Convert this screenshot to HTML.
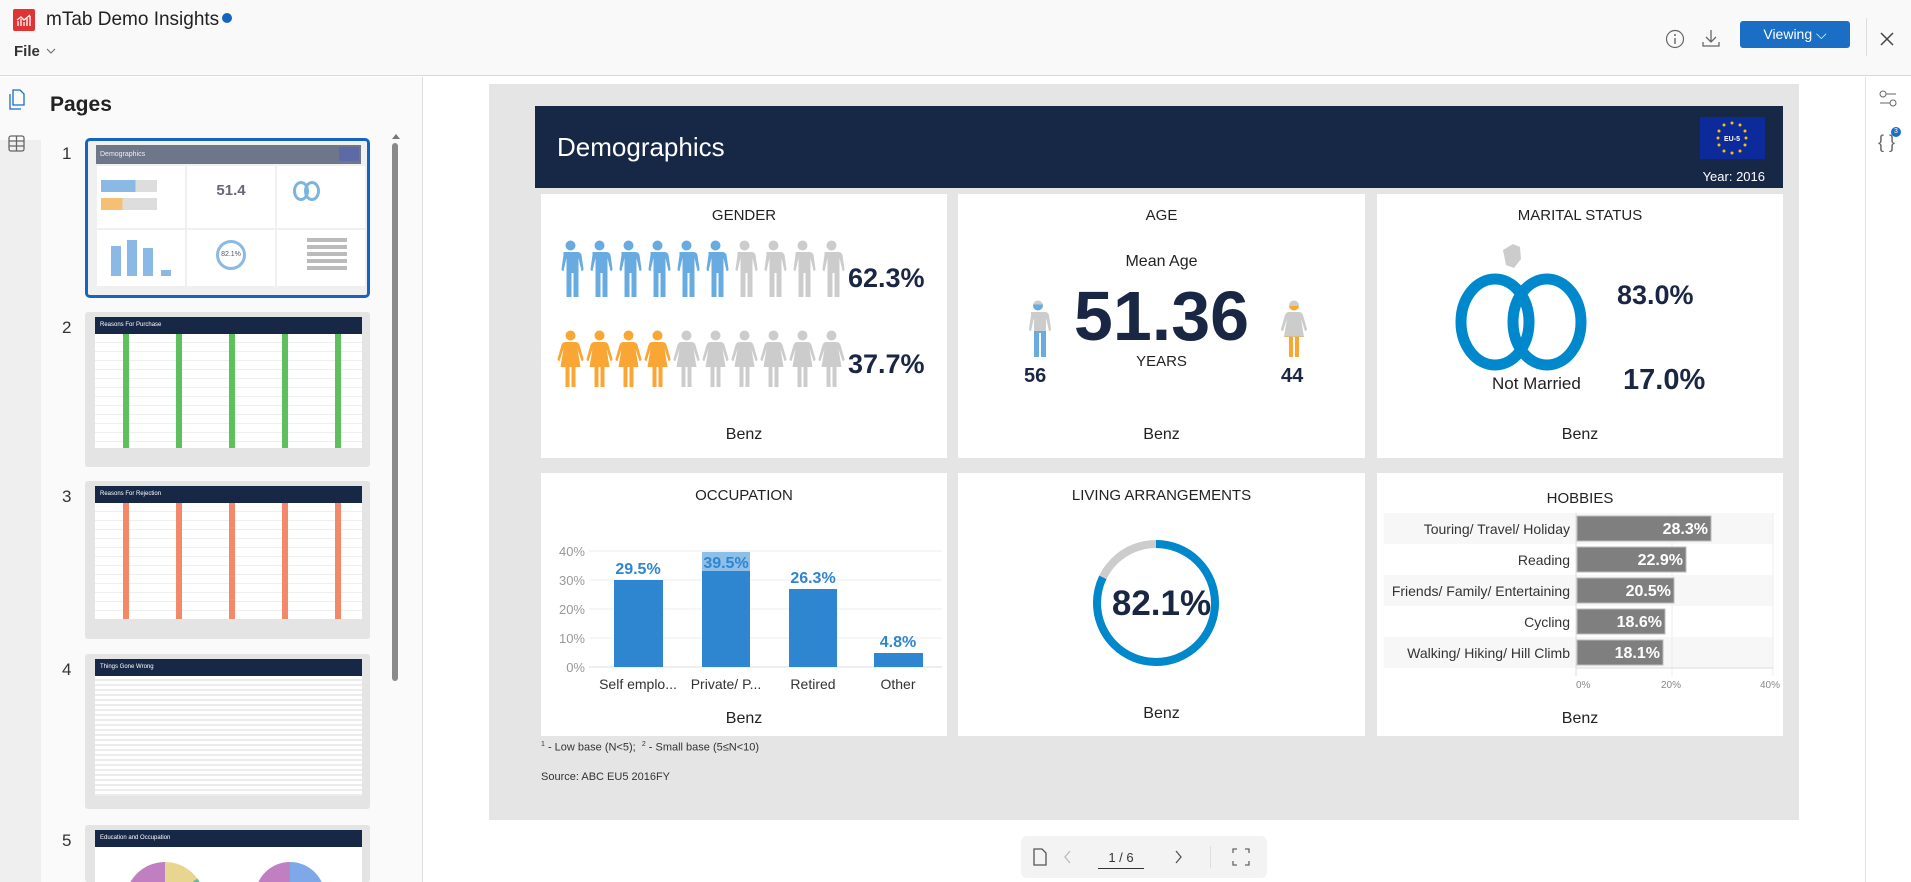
<!DOCTYPE html>
<html><head><meta charset="utf-8">
<style>
*{box-sizing:border-box;margin:0;padding:0}
html,body{width:1911px;height:882px;overflow:hidden}
body{background:#fff;font-family:"Liberation Sans",Arial,sans-serif;color:#222;position:relative}
.abs{position:absolute}
.hdr{left:0;top:0;width:1911px;height:76px;background:#f9f9f9;border-bottom:1px solid #d9d9d9}
.rail{left:0;top:77px;width:41px;height:805px;background:#efefef}
.panel{left:41px;top:77px;width:382px;height:805px;background:#fafafa;border-right:1px solid #ddd}
.rrail{left:1865px;top:77px;width:46px;height:805px;background:#fff;border-left:1px solid #e2e2e2}
.canvas{left:489px;top:84px;width:1310px;height:736px;background:#e5e5e5}
.banner{left:535px;top:106px;width:1248px;height:82px;background:#172847}
.card{background:#fff}
.ct{position:absolute;left:0;width:100%;text-align:center;font-size:15px;color:#222}
.big{font-weight:bold;color:#1a2744}
.thumb{left:85px;width:285px;background:#e4e4e4;border-radius:3px;overflow:hidden}
.tnum{left:62px;font-size:17px;color:#333}
.th{position:absolute;left:10px;right:8px;top:5px;height:17px;background:#172847;color:#fff;font-size:6px;line-height:17px;padding-left:5px}
.tb{position:absolute;left:10px;right:8px;top:22px;background:#fff;overflow:hidden}
.grn{background:repeating-linear-gradient(90deg,transparent 0 28px,#5cc05c 28px 34px,transparent 34px 53px) 0 0/100% 100%,repeating-linear-gradient(#fff 0 8px,#eee 8px 9px)}
</style></head><body>

<div class="abs hdr"></div>
<div class="abs" style="left:13px;top:9px;width:22px;height:22px;background:#e03333;border-radius:2px"></div>
<svg class="abs" style="left:15px;top:11px" width="18" height="18" viewBox="0 0 18 18"><path d="M3 15V10M6 15V8M9 15V11M12 15V7M15 15V5M2 9l4-3 3 3 6-5" stroke="#fff" stroke-width="1.3" fill="none"/></svg>
<div class="abs" style="left:46px;top:9px;font-size:19px;color:#222;white-space:nowrap">mTab Demo Insights<span style="display:inline-block;width:10px;height:10px;border-radius:50%;background:#1565c0;margin-left:3px;vertical-align:2px"></span></div>
<div class="abs" style="left:14px;top:43px;font-size:15px;font-weight:bold;color:#333">File</div>
<svg class="abs" style="left:46px;top:48px" width="10" height="7"><path d="M1 1l4 4 4-4" stroke="#666" fill="none"/></svg>
<svg class="abs" style="left:1665px;top:29px" width="20" height="20"><circle cx="10" cy="10" r="8.5" stroke="#666" fill="none" stroke-width="1.2"/><path d="M10 9v6" stroke="#666" stroke-width="1.4"/><circle cx="10" cy="6" r="1" fill="#666"/></svg>
<svg class="abs" style="left:1700px;top:27px" width="22" height="22"><path d="M11 3v12M6 10l5 5 5-5M3 15v4h16v-4" stroke="#666" fill="none" stroke-width="1.3"/></svg>
<div class="abs" style="left:1740px;top:21px;width:110px;height:27px;background:#1a6fc4;border-radius:3px;color:#fff;font-size:14px;line-height:27px;text-align:center">Viewing ⌵</div>
<div class="abs" style="left:1866px;top:18px;width:1px;height:38px;background:#ddd"></div>
<svg class="abs" style="left:1879px;top:31px" width="16" height="16"><path d="M2 2l12 12M14 2L2 14" stroke="#444" stroke-width="1.5"/></svg>

<div class="abs rail"></div>
<div class="abs" style="left:0;top:77px;width:41px;height:63px;background:#fafafa"></div>
<svg class="abs" style="left:7px;top:88px" width="20" height="22"><path d="M6 2h7l4 4v11H6z" stroke="#1a6fc4" fill="none" stroke-width="1.3"/><path d="M3 6v15h11" stroke="#1a6fc4" fill="none" stroke-width="1.3"/></svg>
<svg class="abs" style="left:7px;top:134px" width="20" height="20"><rect x="2" y="2" width="15" height="15" rx="2" stroke="#666" fill="none" stroke-width="1.3"/><path d="M2 7h15M2 12h15M9.5 2v15" stroke="#666" stroke-width="1.3"/></svg>
<div class="abs panel"></div>
<div class="abs" style="left:50px;top:93px;font-size:21px;font-weight:bold;color:#222">Pages</div>
<div class="abs rrail"></div>
<svg class="abs" style="left:1878px;top:89px" width="20" height="20"><circle cx="5" cy="5" r="3" stroke="#666" fill="none"/><path d="M8 5h10M2 14h10" stroke="#666"/><circle cx="15" cy="14" r="3" stroke="#666" fill="none"/></svg>
<div class="abs" style="left:1878px;top:132px;font-size:18px;color:#666">{ }</div>
<div class="abs" style="left:1891px;top:127px;width:10px;height:10px;border-radius:50%;background:#1a6fc4;color:#fff;font-size:7px;text-align:center;line-height:10px">3</div>

<div class="abs" style="left:392px;top:134px;width:0;height:0;border-left:4px solid transparent;border-right:4px solid transparent;border-bottom:5px solid #777"></div>
<div class="abs" style="left:392px;top:143px;width:6px;height:538px;background:#8a8a8a;border-radius:3px"></div>

<div class="abs tnum" style="top:144px">1</div>
<div class="abs thumb" style="top:138px;height:160px;border:3px solid #1565c0;border-radius:5px;background:#f0f0f0">
 <div style="position:absolute;left:8px;right:6px;top:4px;height:19px;background:#6e7789;color:#eee;font-size:7px;line-height:19px;padding-left:4px">Demographics<span style="position:absolute;right:2px;top:2px;width:20px;height:14px;background:#5e6aa8"></span></div>
 <div style="position:absolute;left:9px;top:25px;width:88px;height:62px;background:#fff"><div style="position:absolute;left:4px;top:14px;width:56px;height:12px;background:linear-gradient(90deg,#8ab9e5 62%,#ddd 62%)"></div><div style="position:absolute;left:4px;top:32px;width:56px;height:12px;background:linear-gradient(90deg,#f5c074 38%,#ddd 38%)"></div></div>
 <div style="position:absolute;left:99px;top:25px;width:88px;height:62px;background:#fff;text-align:center;font-size:15px;font-weight:bold;color:#667;padding-top:16px">51.4</div>
 <div style="position:absolute;left:189px;top:25px;width:88px;height:62px;background:#fff"><div style="position:absolute;left:16px;top:15px;width:16px;height:20px;border:3px solid #7ab5e0;border-radius:50%"></div><div style="position:absolute;left:27px;top:15px;width:16px;height:20px;border:3px solid #7ab5e0;border-radius:50%"></div></div>
 <div style="position:absolute;left:9px;top:89px;width:88px;height:56px;background:#fff"><div style="position:absolute;left:14px;top:16px;width:10px;height:30px;background:#8ab9e5"></div><div style="position:absolute;left:30px;top:10px;width:10px;height:36px;background:#8ab9e5"></div><div style="position:absolute;left:46px;top:18px;width:10px;height:28px;background:#8ab9e5"></div><div style="position:absolute;left:64px;top:40px;width:10px;height:6px;background:#8ab9e5"></div></div>
 <div style="position:absolute;left:99px;top:89px;width:88px;height:56px;background:#fff"><div style="position:absolute;left:29px;top:10px;width:30px;height:30px;border:3px solid #8ab9e5;border-radius:50%;font-size:7px;text-align:center;line-height:24px;color:#556">82.1%</div></div>
 <div style="position:absolute;left:189px;top:89px;width:88px;height:56px;background:#fff"><div style="position:absolute;left:30px;top:8px;width:40px;height:32px;background:repeating-linear-gradient(#bbb 0 4px,#fff 4px 7px)"></div></div>
</div>

<div class="abs tnum" style="top:318px">2</div>
<div class="abs thumb" style="top:312px;height:155px"><div class="th">Reasons For Purchase</div><div class="tb grn" style="height:114px"></div></div>
<div class="abs tnum" style="top:487px">3</div>
<div class="abs thumb" style="top:481px;height:158px"><div class="th">Reasons For Rejection</div><div class="tb" style="height:116px;background:repeating-linear-gradient(90deg,transparent 0 28px,#f4896a 28px 34px,transparent 34px 53px),repeating-linear-gradient(#fff 0 8px,#eee 8px 9px)"></div></div>
<div class="abs tnum" style="top:660px">4</div>
<div class="abs thumb" style="top:654px;height:155px"><div class="th">Things Gone Wrong</div><div class="tb" style="height:120px;background:repeating-linear-gradient(#fff 0 3px,#ececec 3px 5px)"></div></div>
<div class="abs tnum" style="top:831px">5</div>
<div class="abs thumb" style="top:825px;height:57px"><div class="th">Education and Occupation</div><div class="tb" style="height:35px"><div style="position:absolute;left:30px;top:15px;width:80px;height:80px;border-radius:50%;background:conic-gradient(#e8d590 0 15%,#6bb6a0 15% 22%,#c07fc0 22% 100%)"></div><div style="position:absolute;left:160px;top:15px;width:70px;height:70px;border-radius:50%;background:conic-gradient(#7fa8e8 0 30%,#fff 30% 75%,#c07fc0 75% 100%)"></div></div></div>

<div class="abs canvas"></div>
<div class="abs banner"></div>
<div class="abs" style="left:557px;top:132px;font-size:26px;color:#fff">Demographics</div>
<div class="abs" style="left:1700px;top:117px;width:65px;height:42px;background:#0d2a9a"></div>
<svg class="abs" style="left:1700px;top:117px" width="65" height="42"><g fill="#f5c400"><circle cx="32" cy="6" r="1.5"/><circle cx="40" cy="8" r="1.5"/><circle cx="45" cy="14" r="1.5"/><circle cx="46" cy="21" r="1.5"/><circle cx="45" cy="28" r="1.5"/><circle cx="40" cy="34" r="1.5"/><circle cx="32" cy="36" r="1.5"/><circle cx="24" cy="34" r="1.5"/><circle cx="19" cy="28" r="1.5"/><circle cx="18" cy="21" r="1.5"/><circle cx="19" cy="14" r="1.5"/><circle cx="24" cy="8" r="1.5"/></g><text x="32" y="24" fill="#fff" font-size="7" font-weight="bold" text-anchor="middle" font-family="Liberation Sans">EU-5</text></svg>
<div class="abs" style="left:1700px;top:169px;width:65px;text-align:right;font-size:13px;color:#fff;white-space:nowrap">Year: 2016</div>

<svg width="0" height="0" style="position:absolute"><defs>
<symbol id="man" viewBox="0 0 26 60"><circle cx="13" cy="5.5" r="5"/><path d="M6 12h14q3 0 4 3l2 14q0 2-2 2l-3-13v39h-5V33h-2v24H9V18l-3 13q-2 0-2-2l2-14q0-3 0-3z"/></symbol>
<symbol id="woman" viewBox="0 0 26 60"><circle cx="13" cy="5.5" r="5"/><path d="M8 12h10q3 0 4 3l4 14q0 2-2 2l-4-12 3 18h-5v20h-4V37h-2v20H8V37H3l3-18-4 12q-2 0-2-2l4-14q1-3 4-3z"/></symbol>
<linearGradient id="mg" x1="0" y1="0" x2="0" y2="1"><stop offset=".42" stop-color="#cccccc"/><stop offset=".42" stop-color="#68abe0"/></linearGradient>
<linearGradient id="fg" x1="0" y1="0" x2="0" y2="1"><stop offset=".55" stop-color="#cccccc"/><stop offset=".55" stop-color="#faa634"/></linearGradient>
</defs></svg>

<div class="abs card" style="left:541px;top:194px;width:406px;height:264px">
 <div class="ct" style="top:13px">GENDER</div>
 <svg class="abs" style="left:16px;top:46px" width="290" height="62"><g fill="#68abe0"><use href="#man" x="0" width="27" height="60"/><use href="#man" x="29" width="27" height="60"/><use href="#man" x="58" width="27" height="60"/><use href="#man" x="87" width="27" height="60"/><use href="#man" x="116" width="27" height="60"/><use href="#man" x="145" width="27" height="60"/></g><g fill="#cccccc"><use href="#man" x="174" width="27" height="60"/><use href="#man" x="203" width="27" height="60"/><use href="#man" x="232" width="27" height="60"/><use href="#man" x="261" width="27" height="60"/></g></svg>
 <svg class="abs" style="left:16px;top:136px" width="290" height="62"><g fill="#faa634"><use href="#woman" x="0" width="27" height="60"/><use href="#woman" x="29" width="27" height="60"/><use href="#woman" x="58" width="27" height="60"/><use href="#woman" x="87" width="27" height="60"/></g><g fill="#cccccc"><use href="#woman" x="116" width="27" height="60"/><use href="#woman" x="145" width="27" height="60"/><use href="#woman" x="174" width="27" height="60"/><use href="#woman" x="203" width="27" height="60"/><use href="#woman" x="232" width="27" height="60"/><use href="#woman" x="261" width="27" height="60"/></g></svg>
 <div class="abs big" style="left:307px;top:69px;font-size:27px">62.3%</div>
 <div class="abs big" style="left:307px;top:155px;font-size:27px">37.7%</div>
 <div class="ct" style="top:232px;font-size:16px">Benz</div>
</div>

<div class="abs card" style="left:958px;top:194px;width:407px;height:264px">
 <div class="ct" style="top:13px">AGE</div>
 <div class="ct" style="top:59px;font-size:16px">Mean Age</div>
 <div class="ct big" style="top:84px;font-size:70px;line-height:76px">51.36</div>
 <div class="ct" style="top:159px;font-size:15px">YEARS</div>
 <svg class="abs" style="left:67px;top:106px" width="26" height="60"><use href="#man" width="26" height="60" fill="url(#mg)"/></svg>
 <div class="abs big" style="left:66px;top:171px;font-size:20px">56</div>
 <svg class="abs" style="left:323px;top:106px" width="26" height="60"><use href="#woman" width="26" height="60" fill="url(#fg)"/></svg>
 <div class="abs big" style="left:323px;top:171px;font-size:20px">44</div>
 <div class="ct" style="top:232px;font-size:16px">Benz</div>
</div>

<div class="abs card" style="left:1377px;top:194px;width:406px;height:264px">
 <div class="ct" style="top:13px">MARITAL STATUS</div>
 <svg class="abs" style="left:78px;top:42px" width="136" height="145"><path d="M48 14l10-6 7 3 1 12-7 9-8-3z" fill="#cccccc"/><ellipse cx="40" cy="86" rx="34" ry="43" stroke="#0088cc" stroke-width="11" fill="none"/><ellipse cx="92" cy="86" rx="34" ry="43" stroke="#0088cc" stroke-width="11" fill="none"/></svg>
 <div class="abs big" style="left:240px;top:86px;font-size:27px">83.0%</div>
 <div class="abs" style="left:115px;top:180px;font-size:17px">Not Married</div>
 <div class="abs big" style="left:246px;top:170px;font-size:29px">17.0%</div>
 <div class="ct" style="top:232px;font-size:16px">Benz</div>
</div>

<div class="abs card" style="left:541px;top:473px;width:406px;height:263px">
 <div class="ct" style="top:14px">OCCUPATION</div>
 <svg class="abs" style="left:0;top:0" width="406" height="263" font-family="Liberation Sans">
  <g stroke="#eee"><line x1="48" y1="78" x2="401" y2="78"/><line x1="48" y1="107" x2="401" y2="107"/><line x1="48" y1="136" x2="401" y2="136"/><line x1="48" y1="165" x2="401" y2="165"/></g>
  <line x1="48" y1="194" x2="401" y2="194" stroke="#ddd"/>
  <g fill="#999" font-size="13" text-anchor="end"><text x="44" y="83">40%</text><text x="44" y="112">30%</text><text x="44" y="141">20%</text><text x="44" y="170">10%</text><text x="44" y="199">0%</text></g>
  <rect x="73" y="107" width="49" height="87" fill="#2e86d0"/>
  <rect x="161" y="79" width="48" height="115" fill="#2e86d0"/><rect x="161" y="79" width="48" height="19" fill="#8dbfe8"/>
  <rect x="248" y="116" width="48" height="78" fill="#2e86d0"/>
  <rect x="333" y="180" width="49" height="14" fill="#2e86d0"/>
  <g fill="#2e86d0" font-size="16" font-weight="bold" text-anchor="middle"><text x="97" y="101">29.5%</text><text x="185" y="95">39.5%</text><text x="272" y="110">26.3%</text><text x="357" y="174">4.8%</text></g>
  <g fill="#333" font-size="14" text-anchor="middle"><text x="97" y="216">Self emplo...</text><text x="185" y="216">Private/ P...</text><text x="272" y="216">Retired</text><text x="357" y="216">Other</text></g>
 </svg>
 <div class="ct" style="top:237px;font-size:16px">Benz</div>
</div>

<div class="abs card" style="left:958px;top:473px;width:407px;height:263px">
 <div class="ct" style="top:14px">LIVING ARRANGEMENTS</div>
 <svg class="abs" style="left:133px;top:65px" width="130" height="130"><circle cx="65" cy="65" r="59" stroke="#cccccc" stroke-width="8" fill="none"/><circle cx="65" cy="65" r="59" stroke="#0088cc" stroke-width="8" fill="none" stroke-dasharray="304.4 370.7" transform="rotate(-90 65 65)"/></svg>
 <div class="ct big" style="top:111px;font-size:35px">82.1%</div>
 <div class="ct" style="top:232px;font-size:16px">Benz</div>
</div>

<div class="abs card" style="left:1377px;top:473px;width:406px;height:263px">
 <div class="ct" style="top:17px">HOBBIES</div>
 <svg class="abs" style="left:0;top:0" width="406" height="263" font-family="Liberation Sans">
  <rect x="7" y="40" width="389" height="31" fill="#f7f7f7"/><rect x="7" y="102" width="389" height="31" fill="#f7f7f7"/><rect x="7" y="164" width="389" height="31" fill="#f7f7f7"/>
  <line x1="295" y1="40" x2="295" y2="203" stroke="#eee"/><line x1="396" y1="40" x2="396" y2="203" stroke="#eee"/>
  <line x1="199" y1="40" x2="199" y2="203" stroke="#ddd"/><line x1="199" y1="195" x2="396" y2="195" stroke="#ddd"/>
  <g fill="#7f7f7f" stroke="#bbb"><rect x="200" y="43" width="134" height="25"/><rect x="200" y="74" width="109" height="25"/><rect x="200" y="105" width="97" height="25"/><rect x="200" y="136" width="88" height="25"/><rect x="200" y="167" width="86" height="25"/></g>
  <g fill="#fff" font-size="16" font-weight="bold" text-anchor="end"><text x="331" y="61">28.3%</text><text x="306" y="92">22.9%</text><text x="294" y="123">20.5%</text><text x="285" y="154">18.6%</text><text x="283" y="185">18.1%</text></g>
  <g fill="#333" font-size="14" text-anchor="end"><text x="193" y="61">Touring/ Travel/ Holiday</text><text x="193" y="92">Reading</text><text x="193" y="123">Friends/ Family/ Entertaining</text><text x="193" y="154">Cycling</text><text x="193" y="185">Walking/ Hiking/ Hill Climb</text></g>
  <g fill="#888" font-size="10"><text x="199" y="215">0%</text><text x="284" y="215">20%</text><text x="383" y="215">40%</text></g>
 </svg>
 <div class="ct" style="top:237px;font-size:16px">Benz</div>
</div>

<div class="abs" style="left:541px;top:741px;font-size:11px;color:#333"><sup style="font-size:7px">1</sup> - Low base (N&lt;5); &nbsp;<sup style="font-size:7px">2</sup> - Small base (5≤N&lt;10)</div>
<div class="abs" style="left:541px;top:771px;font-size:11px;color:#333">Source: ABC EU5 2016FY</div>

<div class="abs" style="left:1021px;top:836px;width:246px;height:42px;background:#f3f3f3;border-radius:6px"></div>
<svg class="abs" style="left:1032px;top:847px" width="16" height="20"><path d="M2 2h8l4 4v12H2z" stroke="#555" fill="none" stroke-width="1.3"/></svg>
<svg class="abs" style="left:1063px;top:850px" width="10" height="14"><path d="M7 1L2 7l5 6" stroke="#bbb" fill="none" stroke-width="1.3"/></svg>
<div class="abs" style="left:1098px;top:850px;width:46px;text-align:center;font-size:13px;color:#333;border-bottom:1px solid #333;padding-bottom:3px">1 / 6</div>
<svg class="abs" style="left:1173px;top:850px" width="10" height="14"><path d="M3 1l5 6-5 6" stroke="#555" fill="none" stroke-width="1.3"/></svg>
<div class="abs" style="left:1210px;top:846px;width:1px;height:22px;background:#ddd"></div>
<svg class="abs" style="left:1232px;top:848px" width="18" height="18"><path d="M1 5V1h4M13 1h4v4M17 13v4h-4M5 17H1v-4" stroke="#666" fill="none" stroke-width="1.3"/></svg>

</body></html>
